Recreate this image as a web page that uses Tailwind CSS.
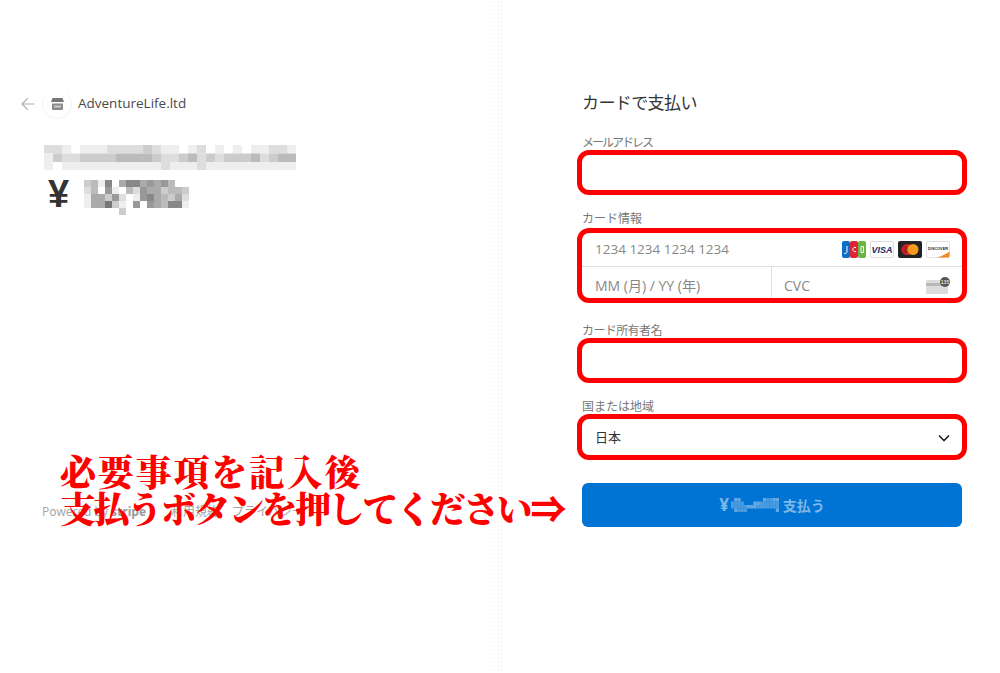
<!DOCTYPE html>
<html lang="ja">
<head>
    <meta charset="UTF-8">
    <title>カードで支払い</title>
    <script src="https://cdn.jsdelivr.net/npm/@tailwindcss/browser@4"></script>
</head>
<body class="bg-white w-[1000px] h-[673px] overflow-hidden relative font-['Open_Sans','Noto_Sans_CJK_JP',sans-serif]">
    <div class="flex h-full">
        <!-- left: order summary -->
        <div class="w-[488px] h-full flex flex-col pt-[89px]">
            <div class="flex items-center h-[30px] pl-[21px]">
                <svg class="w-[14px] h-[14px]" viewBox="0 0 14 14" fill="none" stroke="#b0b0b0" stroke-width="1.2"><path d="M13.5 7H1M6.5 1.5L1 7l5.5 5.5"/></svg>
                <div class="w-[30px] h-[30px] ml-[7px] rounded-full border border-[#f4f4f4] border-t-white flex items-center justify-center">
                    <svg class="w-[13px] h-[12px]" viewBox="0 0 13 12"><path d="M1.5 0h10L13 4H0z" fill="#777"/><path d="M1 5.5h11V11a1 1 0 0 1-1 1H2a1 1 0 0 1-1-1z" fill="#8a8a8a"/><path d="M3 7.5h7v2H3z" fill="#ccc"/></svg>
                </div>
                <span class="ml-[6px] -mt-[2px] text-[13.5px] text-[#4a4a4a]">AdventureLife.ltd</span>
            </div>
            <svg id="mosaicName" class="ml-[44px] mt-[26px]" width="252" height="25"></svg>
            <div class="flex items-start mt-[10px] pl-[48px]">
                <span class="text-[38px] leading-[28px] font-['Liberation_Sans'] font-bold text-[#333] w-[36px]">¥</span>
                <svg id="mosaicPrice" width="105" height="35"></svg>
            </div>
            <div class="flex items-center mt-[288px] pl-[42px] text-[12px] text-[#a3a3a3]">
                <span>Powered by <b class="font-bold text-[#999]">stripe</b></span>
                <span class="ml-[25px]">利用規約</span>
                <span class="ml-[13px]">プライバシー</span>
            </div>
        </div>
        <div class="w-[14px] h-full bg-[radial-gradient(#f1f1f1_1px,transparent_1px)] bg-[length:4px_4px] [mask-image:linear-gradient(to_right,transparent,black)]"></div>

        <!-- right: payment form -->
        <div class="w-[498px] pl-[80px] pt-[91px]">
            <div class="w-[380px]">
                <h1 class="h-6 leading-6 text-[17px] tracking-[-0.6px] text-[#333]">カードで支払い</h1>

                <label class="block mt-[19px] h-4 leading-[18px] text-[12px] tracking-[-2px] text-[#777]">メールアドレス</label>
                <div class="-mx-[5px] h-[45px] border-[5px] border-[#ff0000] rounded-[12px]"></div>

                <label class="block mt-[15px] h-4 leading-[18px] text-[12px] text-[#777]">カード情報</label>
                <div class="-mx-[5px] mt-[2px] h-[75px] border-[5px] border-[#ff0000] rounded-[12px] text-[14px] text-[#888]">
                    <div class="h-[34px] flex items-center justify-between pl-[13px] pr-[12px] border-b border-[#e0e0e0]">
                        <span class="text-[13.5px]">1234 1234 1234 1234</span>
                        <div class="flex gap-[4px]">
                            <svg width="24" height="17" viewBox="0 0 24 17">
                                <rect width="8" height="17" rx="2" fill="#0a6fc9"/><rect x="8" width="8" height="17" rx="2" fill="#e02437"/><rect x="16" width="8" height="17" rx="2" fill="#6cb543"/>
                                <path d="M5 5v6a2 2 0 0 1-3 1.2M14 6.5a2.2 2.2 0 1 0 0 4M19 5.5h2.5v6H19z" fill="none" stroke="#fff" stroke-width="1"/>
                            </svg>
                            <svg width="24" height="17" viewBox="0 0 24 17">
                                <rect x=".5" y=".5" width="23" height="16" rx="1.5" fill="#fff" stroke="#ddd"/>
                                <text x="12" y="12" text-anchor="middle" font-family="Liberation Sans" font-size="9" font-weight="700" font-style="italic" fill="#1a2a6c">VISA</text>
                            </svg>
                            <svg width="24" height="17" viewBox="0 0 24 17">
                                <rect width="24" height="17" rx="2" fill="#222"/><circle cx="9" cy="8.5" r="5.5" fill="#e3202c"/><circle cx="15" cy="8.5" r="5.5" fill="#f59a1f"/>
                                <path d="M6 5v7M8 4v9" stroke="#222" stroke-width=".6"/>
                            </svg>
                            <svg width="24" height="17" viewBox="0 0 24 17">
                                <rect x=".5" y=".5" width="23" height="16" rx="1.5" fill="#fff" stroke="#e2e2e2"/>
                                <path d="M11 16.5C16 15 20 13 23.5 10.5v4.5a1.5 1.5 0 0 1-1.5 1.5z" fill="#f08a24"/>
                                <text x="12" y="9" text-anchor="middle" font-family="Liberation Sans" font-size="3.8" font-weight="700" fill="#222">DISCOVER</text>
                            </svg>
                        </div>
                    </div>
                    <div class="h-[31px] flex pt-[6px]">
                        <div class="w-[190px] -mt-[6px] flex items-center pt-[6px] pl-[13px] border-r border-[#e0e0e0]">MM (月) / YY (年)</div>
                        <div class="flex-1 flex items-center justify-between pl-[12px] pr-[12px]">
                            <span>CVC</span>
                            <svg width="24" height="17" viewBox="0 0 24 17">
                                <rect y="3" width="22" height="14" rx="1.5" fill="#dcdcdc"/><rect y="6" width="22" height="3" fill="#b8b8b8"/>
                                <circle cx="19" cy="5" r="5" fill="#555"/>
                                <text x="19" y="6.8" text-anchor="middle" font-family="Liberation Sans" font-size="5" fill="#fff">135</text>
                            </svg>
                        </div>
                    </div>
                </div>

                <label class="block mt-[19px] h-4 leading-[18px] text-[12px] tracking-[-0.6px] text-[#777]">カード所有者名</label>
                <div class="-mx-[5px] h-[45px] border-[5px] border-[#ff0000] rounded-[12px]"></div>

                <label class="block mt-[15px] h-4 leading-[18px] text-[12px] text-[#777]">国または地域</label>
                <div class="-mx-[5px] h-[46px] border-[5px] border-[#ff0000] rounded-[12px] flex items-center justify-between pl-[13px] pr-[12px] pt-[1px] text-[13px] text-[#333]">
                    <span>日本</span>
                    <svg width="12" height="8" viewBox="0 0 12 8" fill="none" stroke="#222" stroke-width="1.6"><path d="M1 1.5l5 5 5-5"/></svg>
                </div>

                <button class="mt-[23px] w-full h-[44px] rounded-[6px] bg-[#0074d4] flex items-center justify-center font-bold text-[#7db8e8]">
                    <span class="text-[17px]">¥</span>
                    <svg id="mosaicPay" class="ml-[2px] mr-[4px]" width="48" height="14"></svg>
                    <span class="text-[14px]">支払う</span>
                </button>
            </div>
        </div>
    </div>

    <!-- annotation over the page -->
    <div class="absolute left-[60px] top-[453px] font-['Noto_Serif_CJK_JP','Noto_Sans_CJK_JP',serif] font-black text-[#ff0000] leading-[36px] whitespace-nowrap">
        <div class="text-[36px] tracking-[1.8px]">必要事項を記入後</div>
        <div class="text-[36px] tracking-[-2.4px]">支払うボタンを押してください<span class="font-['Noto_Sans_CJK_JP']">⇒</span></div>
    </div>

    <script>
        // pixelated areas of the screenshot, one hex digit per grey cell
        function mosaic(id, rows, w, h, base) {
            const svg = document.getElementById(id);
            let out = '';
            rows.forEach((row, y) => {
                [...row].forEach((c, x) => {
                    if (c === 'f') return;
                    const fill = base ? base[c] : '#' + c + c + c + c + c + c;
                    out += `<rect x="${x * w}" y="${y * h}" width="${w}" height="${h}" fill="${fill}"/>`;
                });
            });
            svg.innerHTML = out;
        }

        mosaic('mosaicName', [
            'ddefeeeddddcdeefedfefefeedde',
            'ecddccccbbbbcddcbdcdcccbdcbb',
            'efeeeeeeeeeeedeeedeeeeeeeeee'
        ], 9, 8.5);
        mosaic('mosaicPrice', [
            'cbe8fa88a9a9bff',
            'dbf9efbd9aacbbc',
            'eaac9dfe98abcad',
            'eaa7cef9f9ab88e',
            'fffffcfffffffff'
        ], 7, 7);
        mosaic('mosaicPay', [
            'fbbfffffffbaabb',
            'aaaafffbbaaaaaa',
            'aaaaabbbaaaaaaa',
            'fbaaafffffffffb'
        ], 3.2, 3.5, {a: '#4a9be0', b: '#66aae4'});
    </script>
</body>
</html>
